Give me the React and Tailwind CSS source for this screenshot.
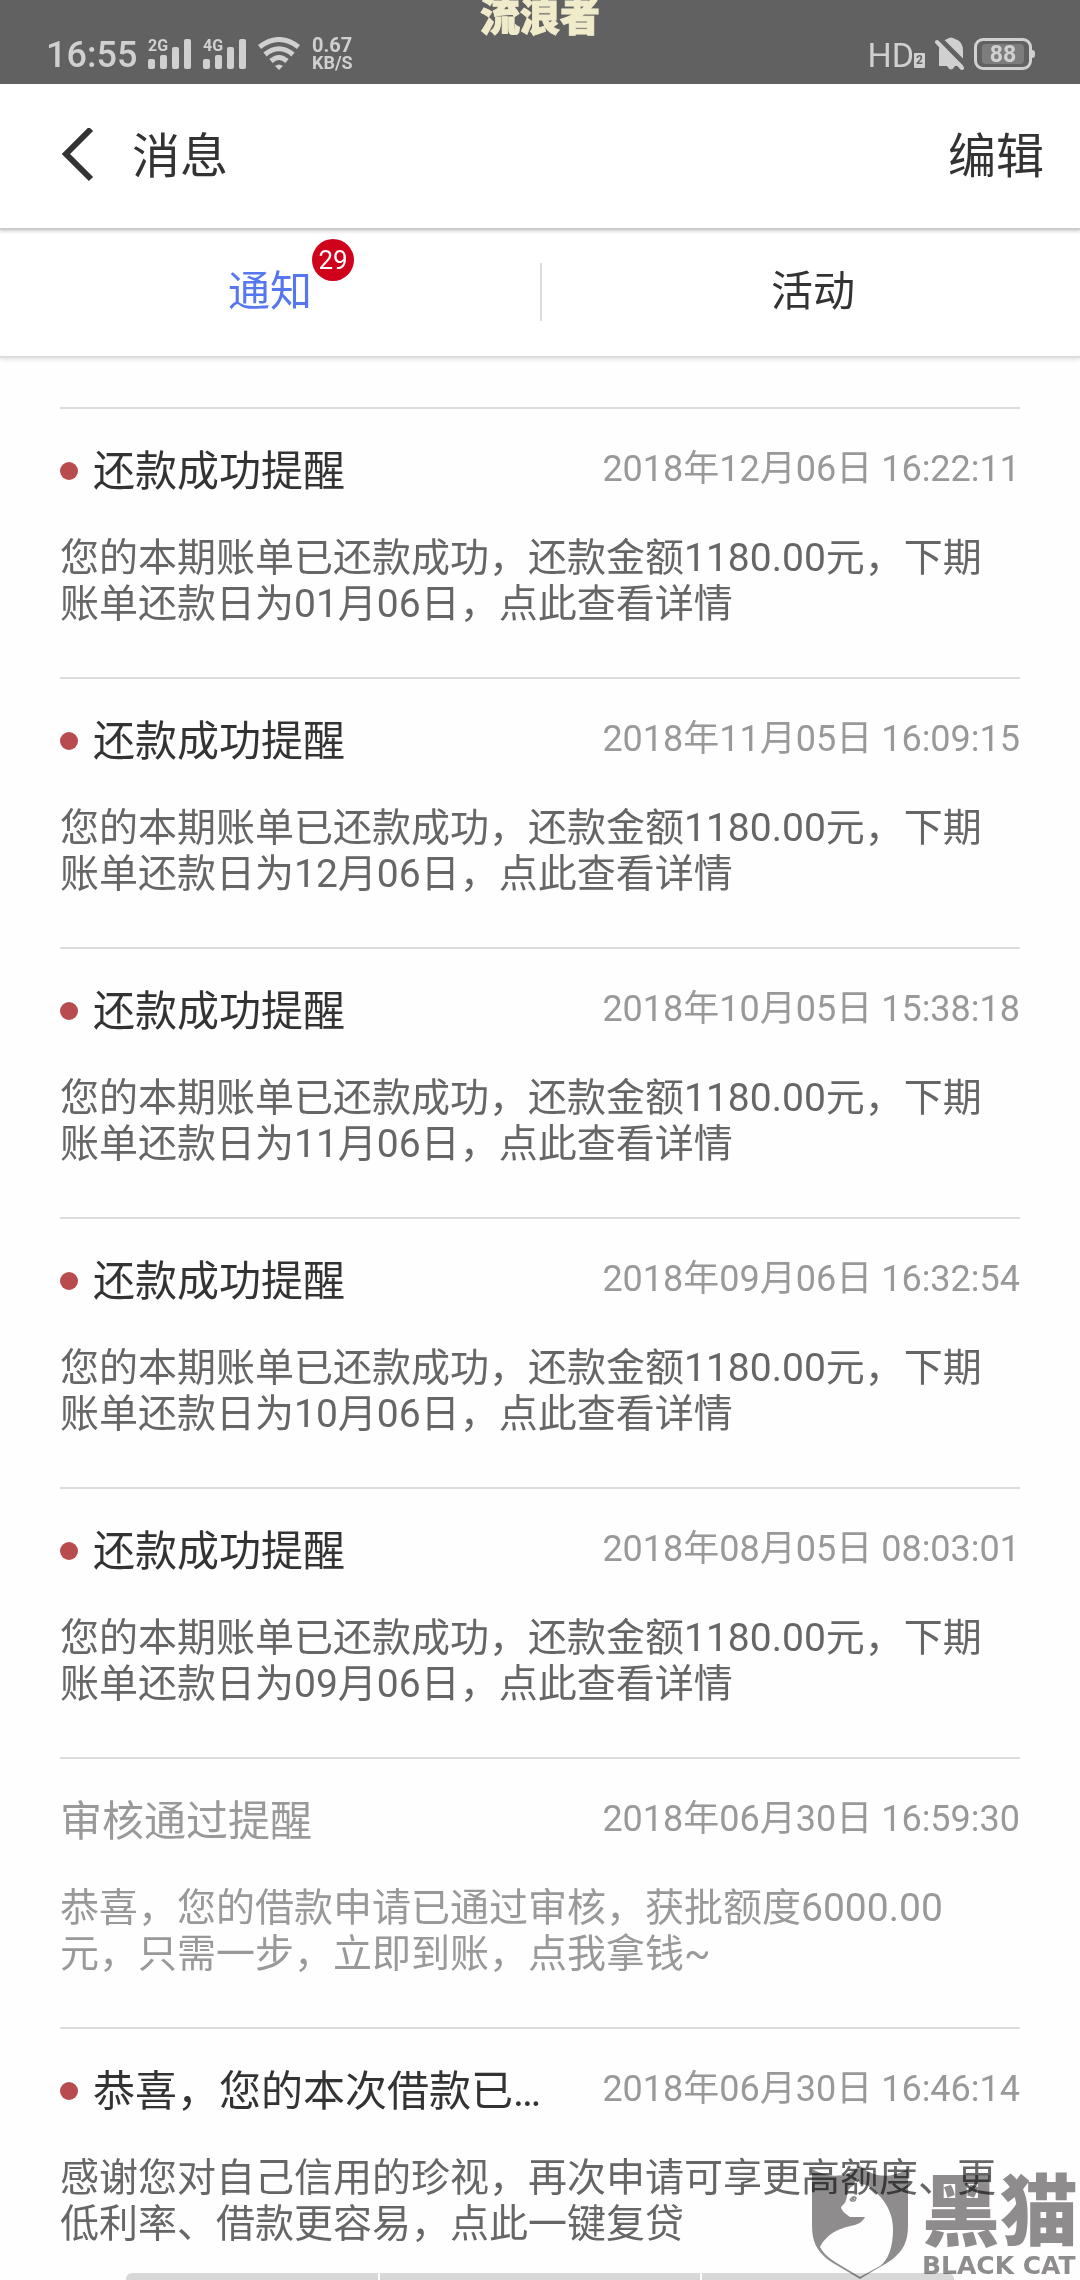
const messages = [
  { title: '还款成功提醒', time: '2018年12月06日 16:22:11', unread: true, body: '您的本期账单已还款成功，还款金额1180.00元，下期账单还款日为01月06日，点此查看详情' },
  { title: '还款成功提醒', time: '2018年11月05日 16:09:15', unread: true, body: '您的本期账单已还款成功，还款金额1180.00元，下期账单还款日为12月06日，点此查看详情' },
  { title: '还款成功提醒', time: '2018年10月05日 15:38:18', unread: true, body: '您的本期账单已还款成功，还款金额1180.00元，下期账单还款日为11月06日，点此查看详情' },
  { title: '还款成功提醒', time: '2018年09月06日 16:32:54', unread: true, body: '您的本期账单已还款成功，还款金额1180.00元，下期账单还款日为10月06日，点此查看详情' },
  { title: '还款成功提醒', time: '2018年08月05日 08:03:01', unread: true, body: '您的本期账单已还款成功，还款金额1180.00元，下期账单还款日为09月06日，点此查看详情' },
  { title: '审核通过提醒', time: '2018年06月30日 16:59:30', unread: false, body: '恭喜，您的借款申请已通过审核，获批额度6000.00元，只需一步，立即到账，点我拿钱~' },
  { title: '恭喜，您的本次借款已到账', time: '2018年06月30日 16:46:14', unread: true, body: '感谢您对自己信用的珍视，再次申请可享更高额度、更低利率、借款更容易，点此一键复贷' },
];

function Signal({ label }) {
  return (
    <span className="relative block h-[31px] w-[44px]">
      <svg viewBox="0 0 44 31" className="h-full w-full fill-current" aria-hidden="true">
        <rect x="0" y="20" width="7" height="10" rx="2" />
        <rect x="12" y="16" width="7" height="14" rx="2" />
        <rect x="24" y="8" width="7" height="22" rx="2" />
        <rect x="36" y="0" width="7" height="30" rx="2" />
      </svg>
      <span className="absolute left-0 top-0 text-[16px] font-bold leading-[13px]">{label}</span>
    </span>
  );
}

function StatusBar() {
  return (
    <div className="relative flex h-[84px] justify-between bg-[#616161] pl-[46px] pr-[45px] pt-6 text-[#d0d0d0]">
      <div className="flex h-[60px] items-center">
        <span className="w-[102px] pt-[2px] text-[36px] font-medium leading-[60px]">16:55</span>
        <span className="flex items-center gap-[11px]">
          <Signal label="2G" />
          <Signal label="4G" />
          <svg viewBox="0 0 42 34" className="h-[34px] w-[42px]" fill="none" stroke="currentColor" strokeWidth="5" aria-hidden="true">
            <path d="M1.500 10Q21-5 40.500 10" />
            <path d="M7 17.500Q21 6 35 17.500" />
            <path d="M13 24Q21 17 29 24" />
            <path d="M21 33l-4-4q4-3 8 0z" fill="currentColor" stroke="none" />
          </svg>
        </span>
        <span className="ml-3 flex flex-col text-[18px] font-bold">
          <span className="text-[20px] leading-[18px]">0.67</span>
          <span className="leading-[18px]">KB/S</span>
        </span>
      </div>
      <div className="absolute inset-x-0 top-0 flex justify-center">
        <span className="text-[40px] font-black leading-[36px] text-[#efebcb] [-webkit-text-stroke:1px_#efebcb]">流浪者</span>
      </div>
      <div className="flex h-[60px] items-center">
        <span className="pt-[2px] text-[34px] leading-[60px]">HD</span>
        <span className="mt-3 h-[15px] w-[11px] rounded-[1px] bg-[#d0d0d0] text-center text-[12px] font-bold leading-[15px] text-[#616161]">2</span>
        <svg viewBox="0 0 30 34" className="ml-[10px] h-[34px] w-[30px]" aria-hidden="true">
          <path d="M4 29V14Q4 4 12 2Q16-1 20 2Q28 4 28 14V29H20Q16 36 12 29Z" fill="#d0d0d0" />
          <path d="M3 0L33 30" stroke="#616161" strokeWidth="5" />
          <path d="M2 5L27 31" stroke="#d0d0d0" strokeWidth="4" strokeLinecap="round" />
        </svg>
        <span className="ml-[9px] flex h-8 w-[58px] items-center justify-center rounded-[9px] border-3 border-current">
          <span className="h-[20px] w-[42px] rounded-[4px] bg-[#7d7d7d] text-center text-[23px] font-bold leading-[21px]">88</span>
        </span>
        <span className="h-2 w-[3px] rounded-r-full bg-current" />
      </div>
    </div>
  );
}

function Header() {
  return (
    <header className="relative z-20 flex h-[144px] items-center justify-between bg-white pl-[60px] pr-9 text-[48px] leading-[56px] shadow-[0_2px_1px_#cccccc,0_4px_3px_#dddddd]">
      <div className="flex items-center">
        <button type="button" aria-label="返回" className="w-[72px]">
          <svg viewBox="0 0 34 56" className="h-14 w-[34px]" fill="none" stroke="#333" strokeWidth="6" aria-hidden="true">
            <path d="M31 1L6 26L31 51" />
          </svg>
        </button>
        <h1 className="pt-[2px]">消息</h1>
      </div>
      <button type="button" className="pt-[2px]">编辑</button>
    </header>
  );
}

function Tabs() {
  return (
    <nav className="relative z-10 flex h-[128px] items-center bg-white text-[42px] leading-[50px] shadow-[0_2px_0_#dcdcdc,0_4px_4px_#e6e6e6]">
      <button type="button" className="flex w-1/2 justify-center text-[#5677ef]">
        <span className="relative">
          通知
          <span className="absolute -top-7 left-full h-[42px] w-[42px] rounded-full bg-[#d0021b] text-center text-[26px] leading-[42px] text-white">29</span>
        </span>
      </button>
      <span className="h-[58px] w-[2px] bg-[#dcdcdc]" />
      <button type="button" className="flex-1 pl-1">活动</button>
    </nav>
  );
}

function Message({ title, time, unread, body }) {
  return (
    <li className="h-[270px] border-t-2 border-[#dcdcdc]">
      <a href="#message" className={unread ? 'block pt-9 text-[#666]' : 'block pt-9 text-[#999]'}>
        <div className="flex h-[52px] items-center">
          {unread && <span className="mr-[15px] h-[18px] w-[18px] flex-none rounded-full bg-[#b84b4e]" />}
          <h2 className={unread ? 'w-[450px] truncate pt-[2px] text-[42px] leading-[52px] text-[#333]' : 'pt-[2px] text-[42px] leading-[52px]'}>{title}</h2>
          <time className="ml-auto whitespace-nowrap pb-1 text-[36px] leading-[46px] text-[#999]">{time}</time>
        </div>
        <p className="mt-[38px] text-[39px] leading-[46px]">{body}</p>
      </a>
    </li>
  );
}

function Watermark() {
  return (
    <div className="absolute bottom-0 right-0 flex items-end pr-[2px] text-[#8f8d8e] mix-blend-multiply">
      <svg viewBox="0 0 98 114" className="mr-[13px] h-[114px] w-[98px]" aria-hidden="true">
        <path d="M1 3Q28 18 49 0Q70 18 97 3V60C97 92 75 96 49 113C23 96 1 92 1 60Z" fill="currentColor" />
        <path d="M46 12L49 18L56 19C66 26 82 40 82 63C82 82 77 94 69 100L49 111L24 96Q13 89 9 81C17 66 30 62 44 59Q52 56 54 51H39Q30 45 30 41Q36 36 36 29Q37 22 42 20Z" fill="#fff" />
        <path d="M39 34q3-5 6-2q-1 5-6 2" fill="none" stroke="currentColor" strokeWidth="1.500" />
        <circle cx="42" cy="33" r="1.500" fill="currentColor" />
      </svg>
      <div className="flex flex-col">
        <span className="text-[78px] font-black leading-[76px]">黑猫</span>
        <span className="font-['DejaVu_Sans'] text-[25px] font-bold leading-[28px]">BLACK CAT</span>
      </div>
    </div>
  );
}

export default function App() {
  return (
    <div className="relative h-screen overflow-hidden bg-[#fefefe] font-[Roboto,'Noto_Sans_CJK_SC',sans-serif] text-[#333]" lang="zh-CN">
      <StatusBar />
      <Header />
      <Tabs />
      <main className="px-[60px] pt-[51px]">
        <ul>
          {messages.map((m) => <Message key={m.time} {...m} />)}
        </ul>
      </main>
      <div className="absolute inset-x-[126px] bottom-0 flex h-[7px] gap-[2px] overflow-hidden rounded-t-md">
        <span className="w-[252px] bg-[#d8d8d8]" />
        <span className="flex-1 bg-[#d8d8d8]" />
        <span className="w-[252px] bg-[#d8d8d8]" />
      </div>
      <Watermark />
    </div>
  );
}
